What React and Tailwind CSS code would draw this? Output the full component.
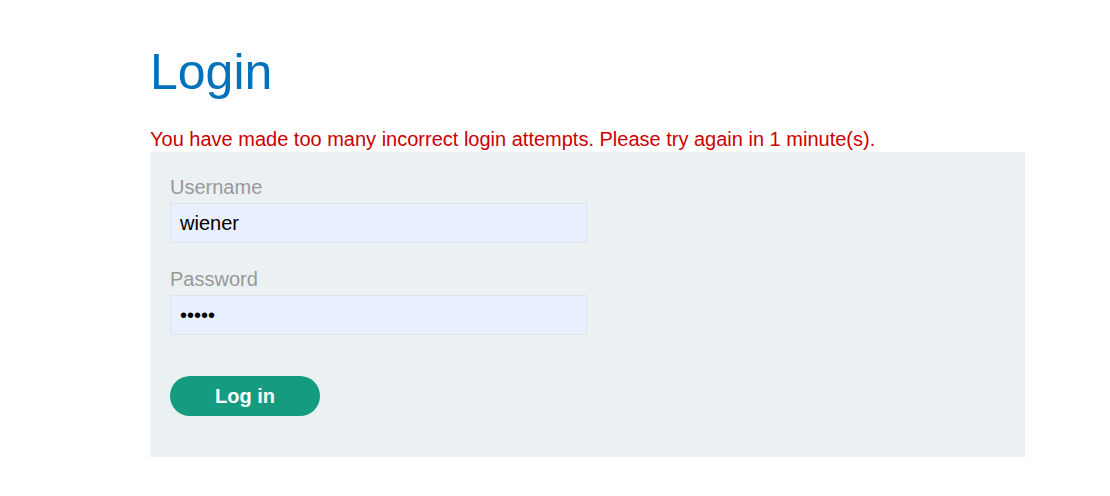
export default function App() {
  return (
    <div className="min-h-[496px] bg-white font-['Liberation_Sans',Arial,sans-serif]">
      <div className="ml-[150px] w-[875px] pt-[40px]">
        <h1 className="text-[50px] leading-[64px] text-[#0071bc]">Login</h1>
        <p className="mt-[22px] text-[20px] leading-[26px] text-[#cc0000]">
          You have made too many incorrect login attempts. Please try again in 1 minute(s).
        </p>
        <form className="h-[305px] bg-[#ebf0f2] px-[20px] pt-[24px]" onSubmit={e => e.preventDefault()}>
          <label className="block text-[20px] leading-[22px] text-[#999999]">Username</label>
          <input
            type="text"
            defaultValue="wiener"
            className="mt-[5px] block h-[40px] w-[417px] border border-[#dde3ea] bg-[#e8f0fe] px-[9px] text-[20px] text-black outline-none"
          />
          <label className="mt-[25px] block text-[20px] leading-[22px] text-[#999999]">Password</label>
          <input
            type="password"
            defaultValue="peter"
            className="mt-[5px] block h-[40px] w-[417px] border border-[#dde3ea] bg-[#e8f0fe] px-[9px] text-[20px] text-black outline-none"
          />
          <button
            type="submit"
            className="mt-[41px] h-[40px] w-[150px] rounded-full bg-[#159b80] text-[20px] font-bold text-white"
          >
            Log in
          </button>
        </form>
      </div>
    </div>
  );
}
